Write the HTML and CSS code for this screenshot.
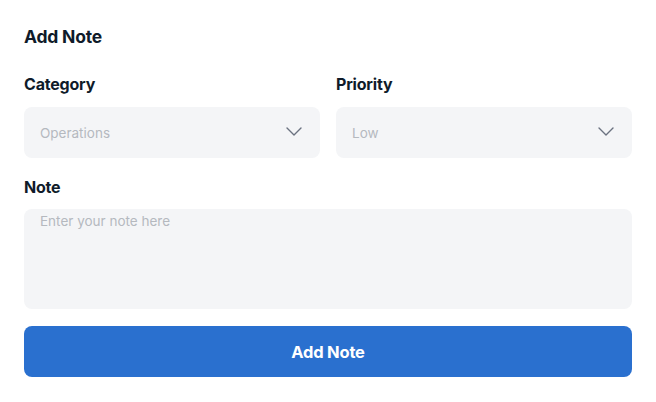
FILE: index.html
```html
<!DOCTYPE html>
<html>
<head>
<meta charset="utf-8">
<link rel="stylesheet" href="styles.css">
</head>
<body>
<form class="card">
  <h2 class="title">Add Note</h2>
  <div class="row">
    <div class="field">
      <label class="label">Category</label>
      <div class="select">
        <span class="placeholder">Operations</span>
        <svg class="chev" width="16" height="9" viewBox="0 0 16 9"><path d="M1 1l7 7 7-7" fill="none" stroke="#6b7280" stroke-width="1.4" stroke-linecap="round" stroke-linejoin="round"/></svg>
      </div>
    </div>
    <div class="field">
      <label class="label">Priority</label>
      <div class="select">
        <span class="placeholder">Low</span>
        <svg class="chev" width="16" height="9" viewBox="0 0 16 9"><path d="M1 1l7 7 7-7" fill="none" stroke="#6b7280" stroke-width="1.4" stroke-linecap="round" stroke-linejoin="round"/></svg>
      </div>
    </div>
  </div>
  <div class="field note-field">
    <label class="label">Note</label>
    <div class="textarea"><span class="placeholder">Enter your note here</span></div>
  </div>
  <button type="button" class="btn">Add Note</button>
</form>
</body>
</html>
```
FILE: styles.css
```css
* { box-sizing: border-box; }
html, body { margin: 0; padding: 0; background: #ffffff; }
body { font-family: "Inter", "Lato", sans-serif; color: #0f1b2a; }
.card { padding: 25px 24px 0 24px; display: flex; flex-direction: column; width: 656px; }
.title { margin: 0; font-size: 17.5px; line-height: 24px; font-weight: 700; letter-spacing: -0.2px; }
.row { display: flex; gap: 16px; margin-top: 25px; }
.field { flex: 1; display: flex; flex-direction: column; }
.label { font-size: 16px; line-height: 20px; font-weight: 700; letter-spacing: -0.2px; margin-bottom: 13px; }
.select { height: 51px; background: #f4f5f7; border-radius: 8px; display: flex; align-items: center; justify-content: space-between; padding: 0 18px 0 16px; }
.placeholder { font-size: 13.5px; color: #b5b9bf; }
.chev { display: block; margin-top: -2px; }
.note-field { margin-top: 19px; }
.note-field .label { margin-bottom: 12px; }
.textarea { height: 100px; background: #f4f5f7; border-radius: 8px; padding: 1px 16px; }
.btn { margin-top: 17px; height: 51px; border: none; border-radius: 8px; background: #2a70cf; color: #fff; font-family: inherit; font-size: 16.5px; font-weight: 700; letter-spacing: -0.2px; }
```
